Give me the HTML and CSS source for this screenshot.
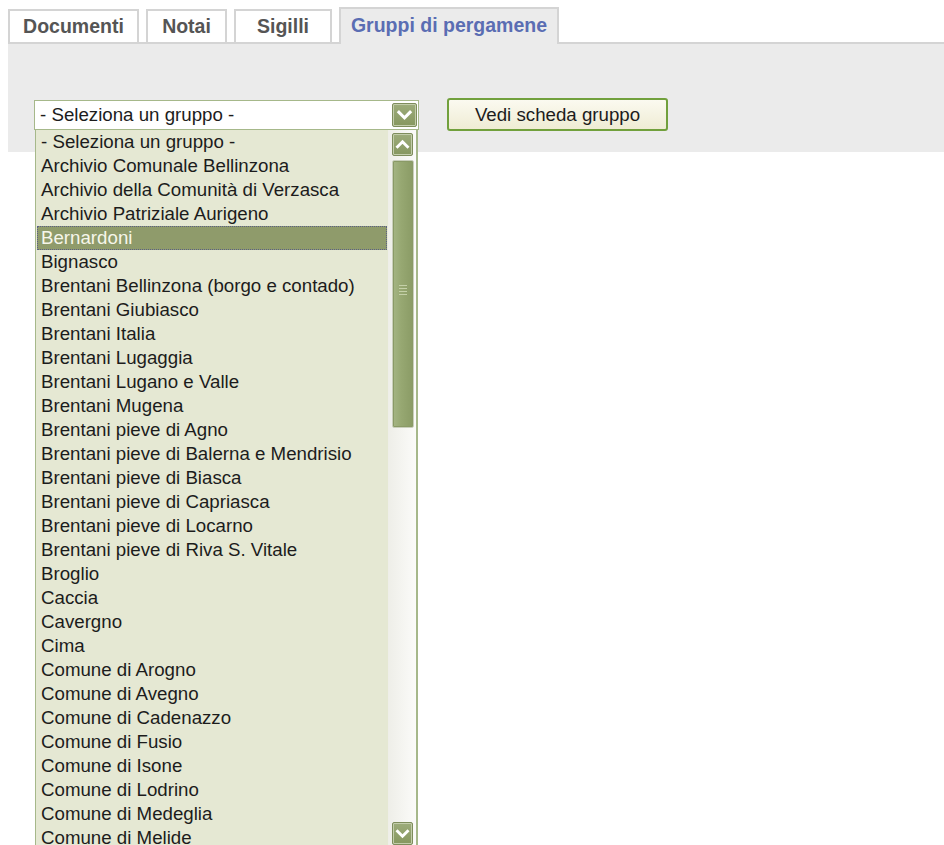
FILE: index.html
```html
<!DOCTYPE html>
<html lang="it">
<head>
<meta charset="utf-8">
<title>Gruppi di pergamene</title>
<link rel="stylesheet" href="styles.css">
</head>
<body>
<div class="page">
  <nav class="tabs">
    <a class="tab tab-doc">Documenti</a>
    <a class="tab tab-notai">Notai</a>
    <a class="tab tab-sigilli">Sigilli</a>
    <a class="tab tab-gruppi is-active">Gruppi di pergamene</a>
  </nav>

  <section class="panel">
    <div class="picker">
      <div class="select">
        <span class="select-value">- Seleziona un gruppo -</span>
        <span class="arrow-btn">
          <svg width="25" height="24" viewBox="0 0 25 24"><polyline points="6.5,9 12.5,15 18.5,9" fill="none" stroke="#fff" stroke-width="3.4" stroke-linecap="square"/></svg>
        </span>
      </div>

      <div class="options">
        <ul class="option-list">
          <li>- Seleziona un gruppo -</li>
          <li>Archivio Comunale Bellinzona</li>
          <li>Archivio della Comunità di Verzasca</li>
          <li>Archivio Patriziale Aurigeno</li>
          <li class="is-hover">Bernardoni</li>
          <li>Bignasco</li>
          <li>Brentani Bellinzona (borgo e contado)</li>
          <li>Brentani Giubiasco</li>
          <li>Brentani Italia</li>
          <li>Brentani Lugaggia</li>
          <li>Brentani Lugano e Valle</li>
          <li>Brentani Mugena</li>
          <li>Brentani pieve di Agno</li>
          <li>Brentani pieve di Balerna e Mendrisio</li>
          <li>Brentani pieve di Biasca</li>
          <li>Brentani pieve di Capriasca</li>
          <li>Brentani pieve di Locarno</li>
          <li>Brentani pieve di Riva S. Vitale</li>
          <li>Broglio</li>
          <li>Caccia</li>
          <li>Cavergno</li>
          <li>Cima</li>
          <li>Comune di Arogno</li>
          <li>Comune di Avegno</li>
          <li>Comune di Cadenazzo</li>
          <li>Comune di Fusio</li>
          <li>Comune di Isone</li>
          <li>Comune di Lodrino</li>
          <li>Comune di Medeglia</li>
          <li>Comune di Melide</li>
        </ul>
        <div class="scrollbar">
          <span class="arrow-btn sb-btn">
            <svg width="21" height="23" viewBox="0 0 21 23"><polyline points="5,14 10.5,8.5 16,14" fill="none" stroke="#fff" stroke-width="3.2" stroke-linecap="square"/></svg>
          </span>
          <span class="thumb"><span class="grip"></span></span>
          <span class="track-rest"></span>
          <span class="arrow-btn sb-btn">
            <svg width="21" height="23" viewBox="0 0 21 23"><polyline points="5,9 10.5,14.5 16,9" fill="none" stroke="#fff" stroke-width="3.2" stroke-linecap="square"/></svg>
          </span>
        </div>
      </div>
    </div>

    <button class="btn">Vedi scheda gruppo</button>
  </section>
</div>
</body>
</html>
```

FILE: styles.css
```css
body {
  margin: 0;
  padding: 0;
  background: #fff;
  font-family: "Liberation Sans", Arial, sans-serif;
  color: #1c1c1c;
}

.page {
  box-sizing: border-box;
  height: 845px;
  padding: 7px 0 0 8px;
}

/* ---------- tab strip ---------- */
.tabs {
  display: flex;
  align-items: flex-end;
  gap: 7px;
  height: 35px;
  border-bottom: 2px solid #d4d4d4;
}

.tab {
  box-sizing: border-box;
  height: 33px;
  display: flex;
  align-items: center;
  justify-content: center;
  padding-bottom: 1px;
  border: 2px solid #d4d4d4;
  border-bottom: 0;
  background: #fff;
  color: #555;
  font-size: 19.5px;
  font-weight: bold;
  text-decoration: none;
}

.tab-doc { width: 131px; }
.tab-notai { width: 81px; }
.tab-sigilli { width: 98px; }
.tab-gruppi { width: 220px; }

.tab.is-active {
  height: 37px;
  margin-bottom: -2px;
  padding-bottom: 3px;
  background: #ebebeb;
  color: #5a6db3;
}

/* ---------- grey panel ---------- */
.panel {
  display: flex;
  align-items: flex-start;
  height: 108px;
  box-sizing: border-box;
  padding: 56px 0 0 26px;
  background: #ebebeb;
}

.picker {
  position: relative;
}

.select {
  box-sizing: border-box;
  width: 385px;
  height: 30px;
  display: flex;
  align-items: center;
  justify-content: space-between;
  border: 1px solid #a6b88a;
  background: #fff;
  font-size: 18.7px;
}

.select-value {
  padding-left: 5px;
}

.select .arrow-btn {
  width: 25px;
  height: 24px;
  margin-right: 1px;
}

.arrow-btn {
  box-sizing: border-box;
  display: flex;
  align-items: center;
  justify-content: center;
  border: 1px solid #7e8d5c;
  border-radius: 2px;
  background: linear-gradient(#9dac7b, #86975f);
  box-shadow: inset 0 0 0 1px #c3cdab;
}

.arrow-btn svg {
  display: block;
}

/* ---------- open option list ---------- */
.options {
  position: absolute;
  top: 30px;
  left: 1px;
  z-index: 2;
  width: 383px;
  height: 715px;
  box-sizing: border-box;
  display: flex;
  border-left: 1px solid #a6b88a;
  border-right: 2px solid #a6b88a;
  background: #e5e8d3;
  overflow: hidden;
}

.option-list {
  list-style: none;
  margin: 0;
  padding: 0 1px;
  width: 350px;
  flex: none;
  font-size: 18.7px;
  line-height: 24px;
}

.option-list li {
  box-sizing: border-box;
  height: 24px;
  padding-left: 4px;
  white-space: nowrap;
}

.option-list li.is-hover {
  background: #8f9b6b;
  color: #f6f6ea;
  border: 1px dotted #5b5f86;
  padding-left: 3px;
  line-height: 22px;
}

/* ---------- scrollbar ---------- */
.scrollbar {
  flex: 1;
  display: flex;
  flex-direction: column;
  gap: 4px;
  padding: 3px 1px 0 4px;
  background: linear-gradient(90deg, #eeeee8, #fbfbf9);
}

.sb-btn {
  width: 21px;
  height: 23px;
  flex: none;
}

.thumb {
  box-sizing: border-box;
  width: 22px;
  height: 268px;
  flex: none;
  display: flex;
  justify-content: center;
  padding-top: 124px;
  border: 1px solid #c9cfbb;
  border-radius: 2px;
  background: linear-gradient(90deg, #a5b584 0%, #97a872 40%, #8a9b65 100%);
  box-shadow: inset 0 0 0 1px #8a9a66;
}

.grip {
  width: 8px;
  height: 10px;
  background: repeating-linear-gradient(#c4d0a8 0 1px, transparent 1px 3px);
}

.track-rest {
  flex: 1;
}

/* ---------- action button ---------- */
.btn {
  box-sizing: border-box;
  width: 221px;
  height: 33px;
  margin: -2px 0 0 28px;
  border: 2px solid #71a03c;
  border-radius: 3px;
  background: linear-gradient(#fbfaf0, #efecd4);
  font-family: "Liberation Sans", Arial, sans-serif;
  font-size: 18.7px;
  color: #1c1c1c;
  padding: 0;
  cursor: pointer;
}
```
